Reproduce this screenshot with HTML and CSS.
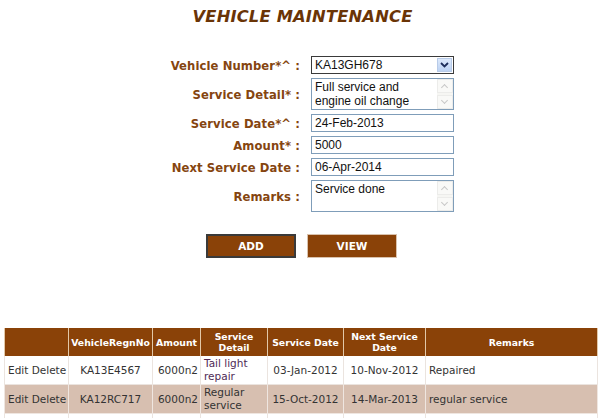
FILE: index.html
```html
<!DOCTYPE html>
<html>
<head>
<meta charset="utf-8">
<link rel="stylesheet" href="styles.css">
</head>
<body>
<h1 class="title">VEHICLE MAINTENANCE</h1>
<form class="form">
  <label class="lbl">Vehicle Number*^ :</label>
  <div class="select">
    <span class="sel-val">KA13GH678</span>
    <span class="sel-btn"><svg width="9" height="6" viewBox="0 0 9 6"><path d="M1 1 L4.5 4.5 L8 1" fill="none" stroke="#1d2d5a" stroke-width="1.8"/></svg></span>
  </div>
  <label class="lbl">Service Detail* :</label>
  <div class="area"><span class="area-txt">Full service and<br>engine oil change</span><span class="scroll"><span class="arr up"></span><span class="arr dn"></span></span></div>
  <label class="lbl">Service Date*^ :</label>
  <div class="inp">24-Feb-2013</div>
  <label class="lbl">Amount* :</label>
  <div class="inp">5000</div>
  <label class="lbl">Next Service Date :</label>
  <div class="inp">06-Apr-2014</div>
  <label class="lbl">Remarks :</label>
  <div class="area"><span class="area-txt">Service done</span><span class="scroll"><span class="arr up"></span><span class="arr dn"></span></span></div>
</form>
<div class="buttons">
  <button class="btn btn-focus" type="button">ADD</button>
  <button class="btn" type="button">VIEW</button>
</div>
<table class="grid">
  <colgroup>
    <col class="c1"><col class="c2"><col class="c3"><col class="c4"><col class="c5"><col class="c6"><col>
  </colgroup>
  <thead>
    <tr>
      <th></th>
      <th>VehicleRegnNo</th>
      <th>Amount</th>
      <th>Service<br>Detail</th>
      <th>Service Date</th>
      <th>Next Service<br>Date</th>
      <th>Remarks</th>
    </tr>
  </thead>
  <tbody>
    <tr>
      <td class="left">Edit Delete</td>
      <td class="center">KA13E4567</td>
      <td class="right">6000n2</td>
      <td class="left detail">Tail light<br>repair</td>
      <td class="center">03-Jan-2012</td>
      <td class="center">10-Nov-2012</td>
      <td class="left">Repaired</td>
    </tr>
    <tr class="alt">
      <td class="left">Edit Delete</td>
      <td class="center">KA12RC717</td>
      <td class="right">6000n2</td>
      <td class="left">Regular<br>service</td>
      <td class="center">15-Oct-2012</td>
      <td class="center">14-Mar-2013</td>
      <td class="left">regular service</td>
    </tr>
    <tr>
      <td></td><td></td><td></td><td></td><td></td><td></td><td></td>
    </tr>
  </tbody>
</table>
</body>
</html>
```
FILE: styles.css
```css
html, body { margin: 0; padding: 0; background: #fff; }
body { font-family: "DejaVu Sans", Verdana, sans-serif; width: 601px; height: 418px; overflow: hidden; }

.title {
  margin: 7px 0 0 0;
  text-align: center;
  font-size: 16.3px;
  font-weight: bold;
  font-style: italic;
  color: #6a3406;
  line-height: 20px;
  letter-spacing: 0.2px;
  padding-left: 4px;
}

.form {
  margin-top: 29px;
  display: grid;
  grid-template-columns: 300px 143px;
  column-gap: 11px;
  row-gap: 4px;
  align-items: center;
}
.lbl {
  text-align: right;
  font-size: 11.6px;
  font-weight: bold;
  color: #854510;
  letter-spacing: 0.1px;
  padding-top: 1px;
}

.select, .inp, .area {
  box-sizing: border-box;
  width: 143px;
  background: #fff;
  font-family: "Liberation Sans", Arial, sans-serif;
  font-size: 12px;
  color: #111;
}
.select {
  height: 18px;
  border: 1px solid #3a3a3a;
  display: flex;
  align-items: center;
  justify-content: space-between;
  padding-left: 3px;
}
.sel-btn {
  width: 15px;
  height: 14px;
  margin-right: 1px;
  background: linear-gradient(#dde9fb, #bcd2f3);
  border: 1px solid #b8cbe8;
  box-sizing: border-box;
  display: flex;
  align-items: center;
  justify-content: center;
}
.inp {
  height: 18px;
  border: 1px solid #7f9db9;
  padding: 1px 3px;
  line-height: 14px;
}
.area {
  height: 32px;
  border: 1px solid #7f9db9;
  display: flex;
  justify-content: space-between;
  line-height: 14px;
}
.area-txt { padding: 1px 3px; }
.scroll {
  width: 16px;
  display: flex;
  flex-direction: column;
  justify-content: space-between;
  background: #f6f6f3;
}
.arr {
  height: 14px;
  border: 1px solid #ececea;
  box-sizing: border-box;
  position: relative;
  background: #f9f9f7;
}
.arr::after {
  content: "";
  position: absolute;
  left: 4px;
  width: 4px;
  height: 4px;
  border-left: 1px solid #c8c8c8;
  border-top: 1px solid #c8c8c8;
}
.arr.up::after { top: 5px; transform: rotate(45deg); }
.arr.dn::after { top: 2px; transform: rotate(-135deg); }

.buttons {
  margin-top: 22px;
  display: flex;
  justify-content: center;
  gap: 11px;
  padding-left: 2px;
}
.btn {
  width: 90px;
  height: 24px;
  background: #8a4208;
  color: #fff;
  font-family: "DejaVu Sans", Verdana, sans-serif;
  font-size: 10.5px;
  font-weight: bold;
  border: 1px solid #d9c2ad;
  padding: 0;
}
.btn-focus { border: 2px solid #3a3a3a; }

.grid {
  margin: 70px 0 0 4px;
  width: 594px;
  table-layout: fixed;
  border-collapse: collapse;
  font-size: 10.5px;
  color: #333;
}
.grid th {
  background: #8a4208;
  color: #fff;
  font-weight: bold;
  font-size: 9.3px;
  line-height: 11px;
  height: 28px;
  padding: 0 1px;
  border-left: 1px solid #e2c8a8;
  border-right: 1px solid #e2c8a8;
  text-align: center;
  white-space: nowrap;
}
.grid td {
  height: 28px;
  padding: 0 3px;
  line-height: 13px;
  border: 1px solid #ebe4df;
  border-top: 0;
  white-space: nowrap;
  overflow: hidden;
}
.grid tr.alt td { background: #d7bfb0; border-color: #efe6e0; }
.grid td.left { text-align: left; }
.grid td.center { text-align: center; }
.grid td.right { text-align: right; padding-right: 2px; }
.grid td.detail { color: #4f2a55; }
.c1 { width: 64px; }
.c2 { width: 84px; }
.c3 { width: 48px; }
.c4 { width: 67px; }
.c5 { width: 76px; }
.c6 { width: 82px; }
```
